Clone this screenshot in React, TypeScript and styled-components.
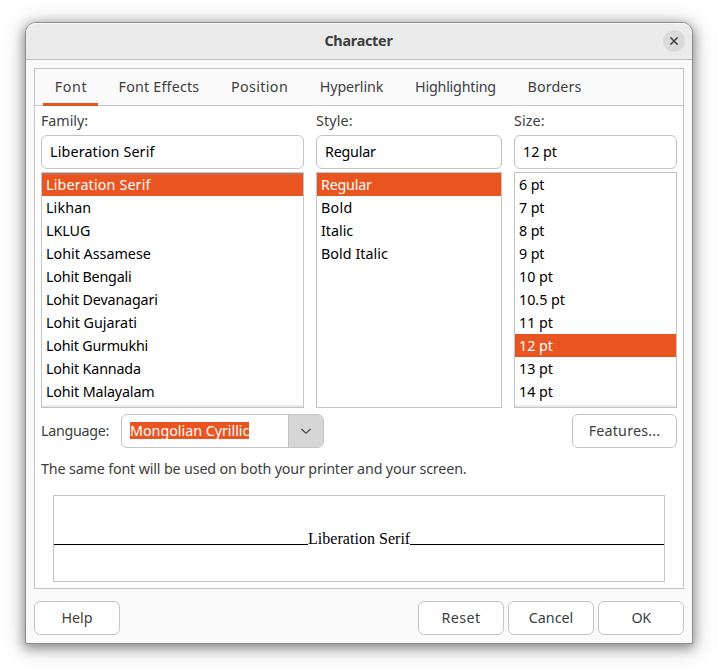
import React from 'react';
import styled, { createGlobalStyle } from 'styled-components';

const ACCENT = '#e95420';
const BORDER = '#c4c4c4';
const INK = '#3d3d3d';

const GlobalStyle = createGlobalStyle`
  *, *::before, *::after { box-sizing: border-box; }
  body {
    margin: 0;
    background: #fff;
    overflow: hidden;
    font-family: "Noto Sans", "Open Sans", sans-serif;
    font-size: 14.3px;
    color: ${INK};
  }
`;

const Desktop = styled.main`
  width: 718px;
  height: 672px;
  padding: 22px 25px 28px;
`;

const Dialog = styled.section`
  display: flex;
  flex-direction: column;
  width: 668px;
  height: 622px;
  border: 1px solid #8d8d8d;
  border-radius: 11px 11px 0 0;
  background: #fafafa;
  box-shadow: 0 3px 12px 1px rgba(0, 0, 0, 0.4), 0 3px 22px 4px rgba(0, 0, 0, 0.14);
`;

const TitleBar = styled.header`
  display: grid;
  grid-template-columns: 34px 1fr 34px;
  align-items: center;
  height: 37px;
  border-bottom: 1px solid #bcbcbc;
  border-radius: 10px 10px 0 0;
  background: #ebebeb;
  box-shadow: inset 0 1px #f9f9f9;
`;

const Title = styled.h1`
  grid-column: 2;
  margin: 0;
  padding-right: 1px;
  font-size: 14.3px;
  font-weight: 700;
  line-height: 36px;
  text-align: center;
  letter-spacing: -0.23px;
`;

const CloseButton = styled.button`
  display: grid;
  place-items: center;
  width: 22px;
  height: 22px;
  padding: 0;
  margin-left: 5px;
  border: 0;
  border-radius: 50%;
  background: #dadada;
  color: ${INK};
`;

const Content = styled.div`
  display: flex;
  flex-direction: column;
  gap: 12px;
  padding: 8px;
`;

const Notebook = styled.div`
  height: 521px;
  border: 1px solid ${BORDER};
  background: #fff;
`;

const TabBar = styled.nav`
  display: flex;
  gap: 8px;
  height: 37px;
  padding-left: 8px;
  border-bottom: 1px solid ${BORDER};
  background: #fafafa;
`;

const Tab = styled.button<{ $width: number; $active: boolean }>`
  width: ${p => p.$width}px;
  height: 37px;
  padding: 0 0 1px 1px;
  border: 0;
  background: none;
  box-shadow: ${p => (p.$active ? `inset 0 -3px ${ACCENT}` : 'none')};
  color: inherit;
  font: inherit;
  line-height: 36px;
`;

const Tracked = styled.span<{ $track?: number }>`
  letter-spacing: ${p => p.$track ?? 0}px;
  white-space: nowrap;
`;

const Page = styled.div`
  padding: 4px 6px 0;
`;

const Columns = styled.div`
  display: grid;
  grid-template-columns: 263px 186px 163px;
  column-gap: 12px;
`;

const Column = styled.div`
  display: flex;
  flex-direction: column;
`;

const Caption = styled.label`
  height: 25px;
  line-height: 22px;
`;

const Entry = styled.div`
  height: 34px;
  margin-bottom: 3px;
  padding-left: 8px;
  border: 1px solid ${BORDER};
  border-radius: 6px;
  background: #fff;
  color: #000;
  line-height: 31px;
`;

const List = styled.ul<{ $above?: boolean; $below?: boolean }>`
  position: relative;
  height: 236px;
  margin: 0;
  padding: 0;
  border: 1px solid ${BORDER};
  background: #fff;
  color: #000;
  list-style: none;

  &::before, &::after {
    content: '';
    position: absolute;
    left: 0;
    right: 0;
    height: 2px;
  }
  &::before {
    top: 0;
    background: ${p => (p.$above ? 'linear-gradient(rgba(140,140,140,.55), rgba(160,160,160,.2))' : 'none')};
  }
  &::after {
    bottom: 0;
    background: ${p => (p.$below ? 'linear-gradient(#f0f0f0, #e4e4e4)' : 'none')};
  }
`;

const ListItem = styled.li<{ $selected: boolean }>`
  height: 23px;
  padding-left: 4px;
  line-height: 23px;
  background: ${p => (p.$selected ? ACCENT : 'transparent')};
  color: ${p => (p.$selected ? '#fff' : 'inherit')};
`;

const LanguageRow = styled.div`
  display: flex;
  align-items: center;
  height: 34px;
  margin-top: 6px;
`;

const LanguageLabel = styled.label`
  width: 80px;
  line-height: 32px;
  padding-bottom: 1px;
`;

const Combo = styled.div`
  display: flex;
  width: 203px;
  height: 34px;
  margin-right: auto;
  border: 1px solid ${BORDER};
  border-radius: 6px;
  overflow: hidden;
`;

const ComboValue = styled.div`
  flex: 1;
  padding: 7px 0 0 8px;
`;

const Selection = styled.span`
  display: block;
  width: 119px;
  height: 17px;
  background: ${ACCENT};
  color: #fff;
  line-height: 17px;
`;

const ComboArrow = styled.button`
  display: grid;
  place-items: center;
  width: 35px;
  padding: 0;
  border: 0;
  border-left: 1px solid ${BORDER};
  background: #d6d6d6;
  color: #4a4a4a;
`;

const Button = styled.button<{ $width?: number }>`
  width: ${p => p.$width ?? 86}px;
  height: 34px;
  padding: 0 0 1px;
  border: 1px solid ${BORDER};
  border-radius: 6px;
  background: #fff;
  color: ${INK};
  font: inherit;
  line-height: 31px;
`;

const Note = styled.p`
  margin: 10px 0 0;
  line-height: 22px;
`;

const Preview = styled.div`
  display: flex;
  width: 612px;
  height: 87px;
  margin: 15px 0 0 12px;
  padding-top: 34px;
  border: 1px solid ${BORDER};
  background: #fff;
  color: #000;
`;

const PreviewRule = styled.span`
  flex: 1;
  height: 15px;
  border-bottom: 1px solid #000;
`;

const PreviewText = styled.span`
  width: 102px;
  font: 16px/18px "Liberation Serif", serif;
  letter-spacing: 0.03px;
  white-space: nowrap;
`;

const Actions = styled.footer`
  display: flex;
  gap: 4px;

  & > :first-child { margin-right: auto; }
`;

type Item = [text: string, track: number];

const tabs: [string, number, number][] = [
  ['Font', 55, 0.55],
  ['Font Effects', 105, 0.19],
  ['Position', 80, 0.38],
  ['Hyperlink', 88, -0.13],
  ['Highlighting', 104, -0.21],
  ['Borders', 78, 0.11],
];

const families: Item[] = [
  ['Liberation Serif', 0.15],
  ['Likhan', 0.12],
  ['LKLUG', -0.05],
  ['Lohit Assamese', 0.01],
  ['Lohit Bengali', -0.18],
  ['Lohit Devanagari', -0.16],
  ['Lohit Gujarati', 0],
  ['Lohit Gurmukhi', -0.22],
  ['Lohit Kannada', -0.16],
  ['Lohit Malayalam', -0.14],
];

const styles: Item[] = [
  ['Regular', -0.22],
  ['Bold', 0.32],
  ['Italic', -0.02],
  ['Bold Italic', 0.05],
];

const sizes: Item[] = ['6', '7', '8', '9', '10', '10.5', '11', '12', '13', '14'].map(
  n => [`${n} pt`, n.length === 1 ? -0.13 : 0],
);

interface PickerProps {
  caption: Item;
  items: Item[];
  selected: number;
  above?: boolean;
  below?: boolean;
}

function Picker({ caption, items, selected, above, below }: PickerProps) {
  const [value, track] = items[selected];
  return (
    <Column>
      <Caption><Tracked $track={caption[1]}>{caption[0]}</Tracked></Caption>
      <Entry><Tracked $track={track}>{value}</Tracked></Entry>
      <List $above={above} $below={below}>
        {items.map(([text, ls], i) => (
          <ListItem key={text} $selected={i === selected}>
            <Tracked $track={ls}>{text}</Tracked>
          </ListItem>
        ))}
      </List>
    </Column>
  );
}

export default function App() {
  return (
    <Desktop>
      <GlobalStyle />
      <Dialog>
        <TitleBar>
          <Title>Character</Title>
          <CloseButton aria-label="Close">
            <svg width="8" height="8" viewBox="0 0 8 8" fill="none" stroke="currentColor" strokeWidth="1.5">
              <path d="M.4.4 7.6 7.6M7.6.4.4 7.6" />
            </svg>
          </CloseButton>
        </TitleBar>
        <Content>
          <Notebook>
            <TabBar>
              {tabs.map(([text, width, track], i) => (
                <Tab key={text} $width={width} $active={i === 0}>
                  <Tracked $track={track}>{text}</Tracked>
                </Tab>
              ))}
            </TabBar>
            <Page>
              <Columns>
                <Picker caption={['Family:', -0.05]} items={families} selected={0} above below />
                <Picker caption={['Style:', 0.12]} items={styles} selected={0} />
                <Picker caption={['Size:', 0.1]} items={sizes} selected={7} below />
              </Columns>
              <LanguageRow>
                <LanguageLabel><Tracked $track={-0.3}>Language:</Tracked></LanguageLabel>
                <Combo>
                  <ComboValue>
                    <Selection><Tracked $track={-0.02}>Mongolian Cyrillic</Tracked></Selection>
                  </ComboValue>
                  <ComboArrow aria-label="Show languages">
                    <svg width="12" height="8" viewBox="0 0 12 8" fill="none" stroke="currentColor" strokeWidth="1.3">
                      <path d="M1.3 2 6 6.2 10.7 2" />
                    </svg>
                  </ComboArrow>
                </Combo>
                <Button $width={105}><Tracked $track={0.18}>Features...</Tracked></Button>
              </LanguageRow>
              <Note>
                <Tracked $track={-0.155}>
                  The same font will be used on both your printer and your screen.
                </Tracked>
              </Note>
              <Preview>
                <PreviewRule />
                <PreviewText>Liberation Serif</PreviewText>
                <PreviewRule />
              </Preview>
            </Page>
          </Notebook>
          <Actions>
            <Button><Tracked $track={0}>Help</Tracked></Button>
            <Button><Tracked $track={0.38}>Reset</Tracked></Button>
            <Button><Tracked $track={-0.02}>Cancel</Tracked></Button>
            <Button><Tracked $track={-0.6}>OK</Tracked></Button>
          </Actions>
        </Content>
      </Dialog>
    </Desktop>
  );
}
